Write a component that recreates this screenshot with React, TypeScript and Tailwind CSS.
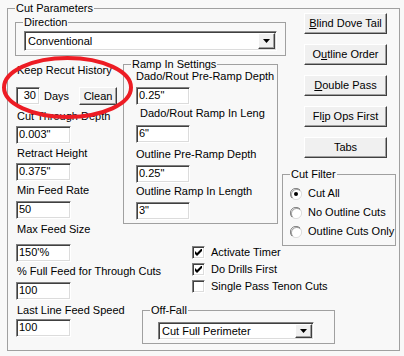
import React from "react";

const sunken =
  "bg-white border border-t-[#808080] border-l-[#808080] border-b-white border-r-white shadow-[inset_1px_1px_0_#404040,inset_-1px_-1px_0_#dcdcdc]";
const raised =
  "bg-[#f0f0f0] border border-t-white border-l-white border-b-[#404040] border-r-[#404040] shadow-[inset_-1px_-1px_0_#a0a0a0]";

function Group({
  title,
  className,
  children,
}: {
  title: string;
  className: string;
  children?: React.ReactNode;
}) {
  return (
    <fieldset className={`border border-[#a0a0a0] ${className}`}>
      <legend className="ml-[7px] px-[1px] leading-[13px] whitespace-nowrap">{title}</legend>
      {children}
    </fieldset>
  );
}

function TextBox({ value, className }: { value: string; className: string }) {
  return (
    <div className={`${sunken} h-[18px] pl-[2px] leading-[15px] whitespace-nowrap overflow-hidden ${className}`}>
      {value}
    </div>
  );
}

function Combo({ value, className }: { value: string; className: string }) {
  return (
    <div className={`${sunken} flex items-center pl-[3px] pr-[1px] ${className}`}>
      <span className="flex-1 whitespace-nowrap">{value}</span>
      <div className={`${raised} w-[17px] h-[calc(100%-2px)] flex items-center justify-center`}>
        <svg width="7" height="4" viewBox="0 0 7 4">
          <path d="M0 0h7L3.5 4z" fill="#000" />
        </svg>
      </div>
    </div>
  );
}

function Btn({ children, className }: { children: React.ReactNode; className: string }) {
  return (
    <div className={`${raised} flex items-center justify-center whitespace-nowrap ${className}`}>
      {children}
    </div>
  );
}

function Check({ label, checked }: { label: string; checked: boolean }) {
  return (
    <div className="h-[17px] flex items-center whitespace-nowrap">
      <div className={`${sunken} w-[13px] h-[13px] flex items-center justify-center`}>
        {checked && (
          <svg width="7" height="7" viewBox="0 0 7 7">
            <path d="M0 2v3l2 2 5-5V-1L2 4z" fill="#000" />
          </svg>
        )}
      </div>
      <span className="ml-[6px]">{label}</span>
    </div>
  );
}

function Radio({ label, checked }: { label: string; checked: boolean }) {
  return (
    <div className="h-[19px] flex items-center whitespace-nowrap">
      <svg width="12" height="12" viewBox="0 0 12 12" className="ml-[7px]">
        <circle cx="6" cy="6" r="5.5" fill="#fff" />
        <path d="M10 2A5.5 5.5 0 0 0 2 10" stroke="#808080" strokeWidth="1" fill="none" />
        <path d="M10.5 3A5 5 0 0 0 3 10.5" stroke="#404040" strokeWidth="1" fill="none" opacity="0.5" />
        <path d="M2 10A5.5 5.5 0 0 0 10 2" stroke="#dcdcdc" strokeWidth="1" fill="none" />
        {checked && <circle cx="6" cy="6" r="2" fill="#000" />}
      </svg>
      <span className="ml-[6px]">{label}</span>
    </div>
  );
}

const leftFields = [
  { label: "Cut Through Depth", value: '0.003"', lm: "mt-[5px]", im: "mt-[3px]" },
  { label: "Retract Height", value: '0.375"', lm: "mt-[3px]", im: "mt-[3px]" },
  { label: "Min Feed Rate", value: "50", lm: "mt-[3px]", im: "mt-[4px]" },
  { label: "Max Feed Size", value: "150'%", lm: "mt-[4px]", im: "mt-[8px]" },
  { label: "% Full Feed for Through Cuts", value: "100", lm: "mt-[3px]", im: "mt-[4px]" },
  { label: "Last Line Feed Speed", value: "100", lm: "mt-[4px]", im: "mt-[2px]" },
];

const rampFields = [
  { label: "Dado/Rout Pre-Ramp Depth", value: '0.25"', lm: "-mt-[1px]", im: "mt-[4px]" },
  { label: "Dado/Rout Ramp In Leng", value: '6"', lm: "mt-[2px] ml-[4px]", im: "mt-[5px]" },
  { label: "Outline Pre-Ramp Depth", value: '0.25"', lm: "mt-[5px]", im: "mt-[4px]" },
  { label: "Outline Ramp In Length", value: '3"', lm: "mt-[2px]", im: "mt-[4px]" },
];

export default function App() {
  return (
    <div className="relative w-[404px] h-[356px] overflow-hidden bg-[#f8f8f8] text-black text-[11px] leading-[13px] font-['Liberation_Sans',Arial,sans-serif] pt-[2px] pl-[7px]">
      <Group title="Cut Parameters" className="w-[393px] h-[349px]">
        <div className="flex pl-[7px]">
          {/* left side */}
          <div className="w-[267px] flex flex-col">
            <Group title="Direction" className="mt-[1px] w-[271px] h-[40px]">
              <Combo value="Conventional" className="ml-[8px] mt-[2px] w-[253px] h-[20px]" />
            </Group>

            <div className="flex">
              <div className="w-[108px] pl-[1px] flex flex-col">
                <div className="mt-[8px] pl-[1px] whitespace-nowrap">Keep Recut History</div>
                <div className="mt-[10px] flex items-center">
                  <TextBox value="30" className="w-[24px] text-right pr-[3px]" />
                  <span className="ml-[4px] w-[35px]">Days</span>
                  <Btn className="w-[38px] h-[18px]">Clean</Btn>
                </div>
                {leftFields.map((f) => (
                  <React.Fragment key={f.label}>
                    <div className={`${f.lm} pl-[1px] whitespace-nowrap`}>{f.label}</div>
                    <TextBox value={f.value} className={`${f.im} w-[55px]`} />
                  </React.Fragment>
                ))}
              </div>

              <div className="flex flex-col">
                <Group title="Ramp In Settings" className="mt-[2px] w-[155px] h-[166px]">
                  <div className="pl-[12px] flex flex-col">
                    {rampFields.map((f) => (
                      <React.Fragment key={f.label}>
                        <div className={`${f.lm} whitespace-nowrap`}>{f.label}</div>
                        <TextBox value={f.value} className={`${f.im} w-[54px]`} />
                      </React.Fragment>
                    ))}
                  </div>
                </Group>

                <div className="mt-[20px] ml-[69px] flex flex-col">
                  <Check label="Activate Timer" checked />
                  <Check label="Do Drills First" checked />
                  <Check label="Single Pass Tenon Cuts" checked={false} />
                </div>

                <Group title="Off-Fall" className="mt-[9px] ml-[19px] w-[193px] h-[40px]">
                  <Combo value="Cut Full Perimeter" className="ml-[15px] mt-[5px] w-[156px] h-[18px]" />
                </Group>
              </div>
            </div>
          </div>

          {/* right side */}
          <div className="w-[114px] flex flex-col">
            <div className="-mt-[2px] ml-[22px] flex flex-col gap-[10px]">
              <Btn className="w-[83px] h-[21px]">
                <u>B</u>lind Dove Tail
              </Btn>
              <Btn className="w-[83px] h-[21px]">
                O<u>u</u>tline Order
              </Btn>
              <Btn className="w-[83px] h-[21px]">
                <u>D</u>ouble Pass
              </Btn>
              <Btn className="w-[83px] h-[21px]">
                Fl<u>i</u>p Ops First
              </Btn>
              <Btn className="w-[83px] h-[21px]">Tabs</Btn>
            </div>

            <Group title="Cut Filter" className="mt-[10px] w-[114px] h-[78px]">
              <div className="mt-[3px] flex flex-col">
                <Radio label="Cut All" checked />
                <Radio label="No Outline Cuts" checked={false} />
                <Radio label="Outline Cuts Only" checked={false} />
              </div>
            </Group>
          </div>
        </div>
      </Group>

      {/* red annotation circle */}
      <svg className="absolute left-0 top-0 pointer-events-none" width="404" height="356">
        <ellipse cx="67.5" cy="87.5" rx="63.5" ry="29.5" stroke="#ed1c24" strokeWidth="4" fill="none" />
      </svg>
    </div>
  );
}
